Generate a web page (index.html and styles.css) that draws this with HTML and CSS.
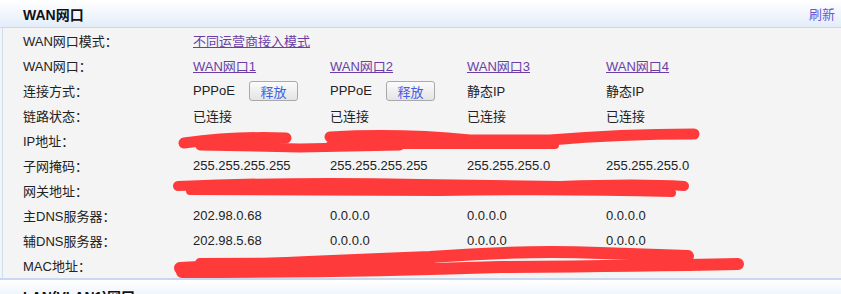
FILE: index.html
```html
<!DOCTYPE html>
<html lang="zh-CN">
<head>
    <meta charset="UTF-8">
    <title>WAN网口</title>
    <link rel="stylesheet" href="styles.css">
</head>
<body>
    <div class="panel-head">
        <span class="panel-title">WAN网口</span>
        <a class="refresh" href="#">刷新</a>
    </div>
    <div class="panel-body">
        <div class="row">
            <span class="label">WAN网口模式：</span>
            <a class="link wide" href="#">不同运营商接入模式</a>
        </div>
        <div class="row">
            <span class="label">WAN网口：</span>
            <span><a class="link" href="#">WAN网口1</a></span>
            <span><a class="link" href="#">WAN网口2</a></span>
            <span><a class="link" href="#">WAN网口3</a></span>
            <span><a class="link" href="#">WAN网口4</a></span>
        </div>
        <div class="row">
            <span class="label">连接方式：</span>
            <span class="cell"><span class="proto">PPPoE</span><button class="btn">释放</button></span>
            <span class="cell"><span class="proto">PPPoE</span><button class="btn">释放</button></span>
            <span>静态IP</span>
            <span>静态IP</span>
        </div>
        <div class="row">
            <span class="label">链路状态：</span>
            <span>已连接</span>
            <span>已连接</span>
            <span>已连接</span>
            <span>已连接</span>
        </div>
        <div class="row">
            <span class="label">IP地址：</span>
            <span></span><span></span><span></span><span></span>
        </div>
        <div class="row">
            <span class="label">子网掩码：</span>
            <span>255.255.255.255</span>
            <span>255.255.255.255</span>
            <span>255.255.255.0</span>
            <span>255.255.255.0</span>
        </div>
        <div class="row">
            <span class="label">网关地址：</span>
            <span></span><span></span><span></span><span></span>
        </div>
        <div class="row">
            <span class="label">主DNS服务器：</span>
            <span>202.98.0.68</span>
            <span>0.0.0.0</span>
            <span>0.0.0.0</span>
            <span>0.0.0.0</span>
        </div>
        <div class="row">
            <span class="label">辅DNS服务器：</span>
            <span>202.98.5.68</span>
            <span>0.0.0.0</span>
            <span>0.0.0.0</span>
            <span>0.0.0.0</span>
        </div>
        <div class="row">
            <span class="label">MAC地址：</span>
            <span></span><span></span><span></span><span></span>
        </div>
    </div>
    <div class="panel-head next">
        <span class="panel-title">LAN(VLAN1)网口</span>
    </div>

    <!-- redaction marks drawn over the hidden values -->
    <svg class="scribble" width="841" height="294" viewBox="0 0 841 294">
        <g fill="none" stroke="#ff3a3a" stroke-linecap="round" stroke-linejoin="round">
            <path stroke-width="11" d="M184 143 Q235 136 286 138"/>
            <path stroke-width="9" d="M200 146 L300 148 L400 146"/>
            <path stroke-width="11" d="M330 137 Q400 133 470 140 L550 140 Q620 134 694 134"/>
            <path stroke-width="8" d="M330 145 L555 145"/>

            <path stroke-width="10" d="M178 186 Q300 181 420 184 L560 186 Q640 183 684 186"/>
            <path stroke-width="8" d="M190 191 L440 192 Q560 190 672 193"/>

            <path stroke-width="12" d="M180 268 Q300 262 430 257 Q520 250 600 253 L688 256"/>
            <path stroke-width="12" d="M182 272 Q350 272 500 267 Q640 266 738 264"/>
            <path stroke-width="10" d="M200 263 L430 262"/>
        </g>
    </svg>
</body>
</html>
```

FILE: styles.css
```css
body {
    margin: 0;
    background: #f4f4f4;
    font-family: "Liberation Sans", "Noto Sans CJK SC", sans-serif;
    font-size: 13px;
    color: #222;
    position: relative;
    width: 841px;
    height: 294px;
    overflow: hidden;
}

.panel-head {
    height: 27px;
    border-bottom: 1px solid #c6d9ee;
    background: linear-gradient(#ffffff, #e3edf9);
    display: flex;
    align-items: center;
    justify-content: space-between;
    padding: 0 6px 0 23px;
}

.panel-head.next {
    border-top: 2px solid #c6d9ee;
    align-items: flex-start;
    height: 21px;
    padding-top: 6px;
    border-bottom: none;
}

.panel-title {
    font-size: 14px;
    font-weight: bold;
    color: #111;
}

.refresh {
    color: #6d55d6;
    text-decoration: none;
    font-size: 13px;
}

.panel-body {
    margin-left: 2px;
    border-left: 1px solid #cddff0;
    padding-left: 20px;
}

.row {
    display: grid;
    grid-template-columns: 170px 137px 137px 139px 1fr;
    height: 25px;
    align-items: center;
    white-space: nowrap;
}

.label {
    color: #222;
}

.link {
    color: #6a3ea6;
    text-decoration: underline;
}

.wide {
    grid-column: 2 / span 2;
}

.cell {
    display: flex;
    align-items: center;
}

.proto {
    width: 56px;
}

.btn {
    width: 49px;
    height: 20px;
    padding: 0;
    border: 1px solid #a9a9a9;
    border-radius: 3px;
    background: linear-gradient(#fbfbfb, #e4e4e4);
    color: #3e5fe6;
    font-family: "Liberation Sans", "Noto Sans CJK SC", sans-serif;
    font-size: 13px;
}

.scribble {
    position: absolute;
    top: 0;
    left: 0;
    pointer-events: none;
}
```
